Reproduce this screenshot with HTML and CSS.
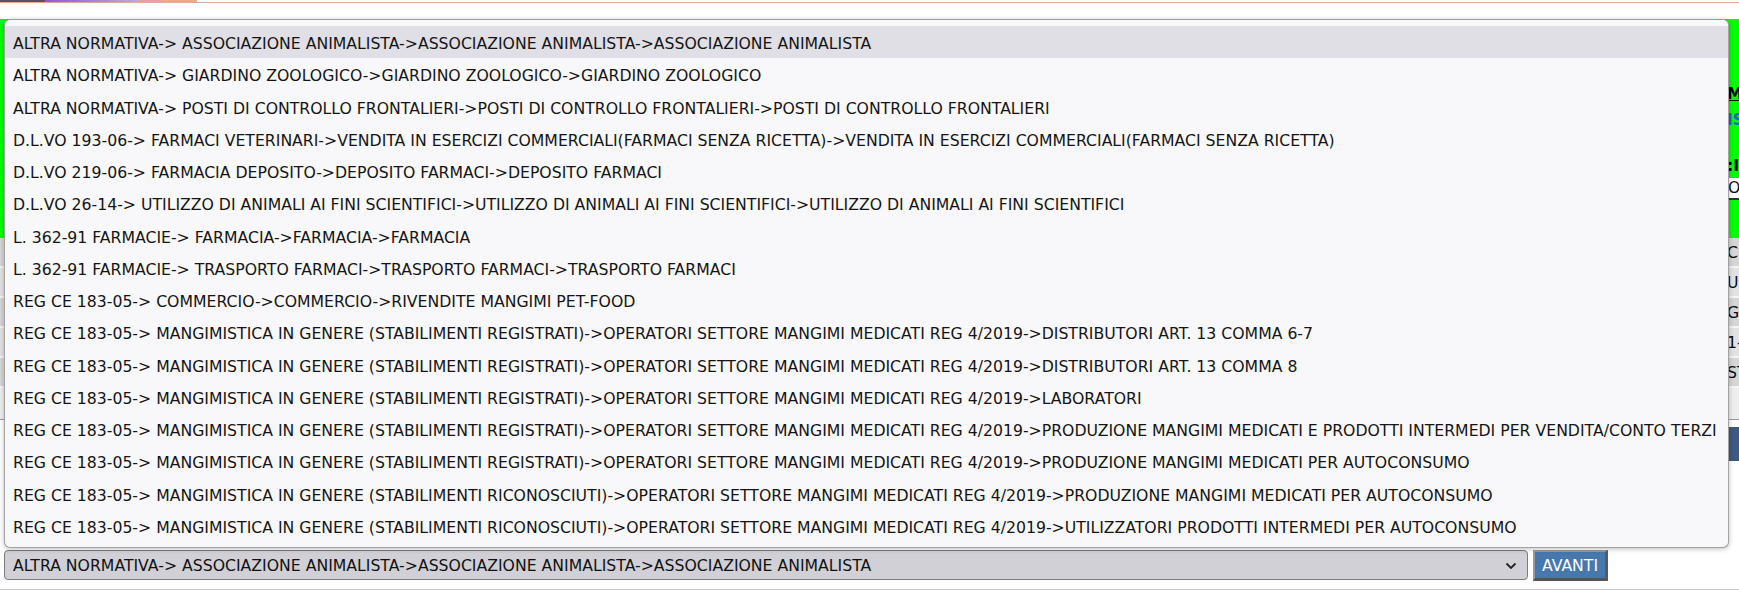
FILE: index.html
```html
<!DOCTYPE html>
<html lang="it">
<head>
<meta charset="utf-8">
<title>Selezione linea</title>
<link rel="stylesheet" href="styles.css">
</head>
<body>
<div class="topbar"></div>
<main class="page">
  <section class="green">
    <div class="side">
      <div class="s-title">MEN</div>
      <div class="s-link">ISC</div>
      <div class="s-label">:IN</div>
      <div class="s-input">ONE</div>
    </div>
  </section>
  <section class="rows">
    <div class="row dark"><span class="cell">CIT</span></div>
    <div class="row light"><span class="cell">UIS</span></div>
    <div class="row dark"><span class="cell">GEN</span></div>
    <div class="row light"><span class="cell">1-2</span></div>
    <div class="row dark"><span class="cell">STA</span></div>
    <div class="row foot"></div>
  </section>
  <div class="barline"><div class="bluebar"></div></div>
  <div class="form">
    <div class="select">
      <span class="sel-text">ALTRA NORMATIVA-&gt; ASSOCIAZIONE ANIMALISTA-&gt;ASSOCIAZIONE ANIMALISTA-&gt;ASSOCIAZIONE ANIMALISTA</span>
      <svg class="chev" width="12" height="8" viewBox="0 0 12 8"><path d="M1.5 1.5 L6 6 L10.5 1.5" fill="none" stroke="#222" stroke-width="1.8"/></svg>
    </div>
    <button class="avanti">AVANTI</button>
  </div>
  <div class="bottomline"></div>
</main>
<ul class="popup">
  <li class="opt sel">ALTRA NORMATIVA-&gt; ASSOCIAZIONE ANIMALISTA-&gt;ASSOCIAZIONE ANIMALISTA-&gt;ASSOCIAZIONE ANIMALISTA</li>
  <li class="opt">ALTRA NORMATIVA-&gt; GIARDINO ZOOLOGICO-&gt;GIARDINO ZOOLOGICO-&gt;GIARDINO ZOOLOGICO</li>
  <li class="opt">ALTRA NORMATIVA-&gt; POSTI DI CONTROLLO FRONTALIERI-&gt;POSTI DI CONTROLLO FRONTALIERI-&gt;POSTI DI CONTROLLO FRONTALIERI</li>
  <li class="opt">D.L.VO 193-06-&gt; FARMACI VETERINARI-&gt;VENDITA IN ESERCIZI COMMERCIALI(FARMACI SENZA RICETTA)-&gt;VENDITA IN ESERCIZI COMMERCIALI(FARMACI SENZA RICETTA)</li>
  <li class="opt">D.L.VO 219-06-&gt; FARMACIA DEPOSITO-&gt;DEPOSITO FARMACI-&gt;DEPOSITO FARMACI</li>
  <li class="opt">D.L.VO 26-14-&gt; UTILIZZO DI ANIMALI AI FINI SCIENTIFICI-&gt;UTILIZZO DI ANIMALI AI FINI SCIENTIFICI-&gt;UTILIZZO DI ANIMALI AI FINI SCIENTIFICI</li>
  <li class="opt">L. 362-91 FARMACIE-&gt; FARMACIA-&gt;FARMACIA-&gt;FARMACIA</li>
  <li class="opt">L. 362-91 FARMACIE-&gt; TRASPORTO FARMACI-&gt;TRASPORTO FARMACI-&gt;TRASPORTO FARMACI</li>
  <li class="opt">REG CE 183-05-&gt; COMMERCIO-&gt;COMMERCIO-&gt;RIVENDITE MANGIMI PET-FOOD</li>
  <li class="opt">REG CE 183-05-&gt; MANGIMISTICA IN GENERE (STABILIMENTI REGISTRATI)-&gt;OPERATORI SETTORE MANGIMI MEDICATI REG 4/2019-&gt;DISTRIBUTORI ART. 13 COMMA 6-7</li>
  <li class="opt">REG CE 183-05-&gt; MANGIMISTICA IN GENERE (STABILIMENTI REGISTRATI)-&gt;OPERATORI SETTORE MANGIMI MEDICATI REG 4/2019-&gt;DISTRIBUTORI ART. 13 COMMA 8</li>
  <li class="opt">REG CE 183-05-&gt; MANGIMISTICA IN GENERE (STABILIMENTI REGISTRATI)-&gt;OPERATORI SETTORE MANGIMI MEDICATI REG 4/2019-&gt;LABORATORI</li>
  <li class="opt">REG CE 183-05-&gt; MANGIMISTICA IN GENERE (STABILIMENTI REGISTRATI)-&gt;OPERATORI SETTORE MANGIMI MEDICATI REG 4/2019-&gt;PRODUZIONE MANGIMI MEDICATI E PRODOTTI INTERMEDI PER VENDITA/CONTO TERZI</li>
  <li class="opt">REG CE 183-05-&gt; MANGIMISTICA IN GENERE (STABILIMENTI REGISTRATI)-&gt;OPERATORI SETTORE MANGIMI MEDICATI REG 4/2019-&gt;PRODUZIONE MANGIMI MEDICATI PER AUTOCONSUMO</li>
  <li class="opt">REG CE 183-05-&gt; MANGIMISTICA IN GENERE (STABILIMENTI RICONOSCIUTI)-&gt;OPERATORI SETTORE MANGIMI MEDICATI REG 4/2019-&gt;PRODUZIONE MANGIMI MEDICATI PER AUTOCONSUMO</li>
  <li class="opt">REG CE 183-05-&gt; MANGIMISTICA IN GENERE (STABILIMENTI RICONOSCIUTI)-&gt;OPERATORI SETTORE MANGIMI MEDICATI REG 4/2019-&gt;UTILIZZATORI PRODOTTI INTERMEDI PER AUTOCONSUMO</li>
</ul>
</body>
</html>
```
FILE: styles.css
```css
html, body {
  margin: 0;
  padding: 0;
  background: #ffffff;
  overflow: hidden;
  width: 1739px;
  height: 591px;
  font-family: "DejaVu Sans", sans-serif;
  font-size: 15.7px;
  color: #111;
  position: relative;
}

.topbar {
  height: 2px;
  border-bottom: 1px solid #dbab94;
  background: linear-gradient(to right,
    #585068 0, #585068 45px,
    #9d50e0 45px, #c9a3e6 140px,
    #f29aa8 140px, #f29aa8 162px,
    #f2a888 162px, #f2a888 197px,
    transparent 197px);
}

.page {
  display: flex;
  flex-direction: column;
}

.green {
  margin-top: 16px;
  height: 219px;
  background: #00ff00;
  display: grid;
  grid-template-columns: 1fr 12px;
}

.side {
  grid-column: 2;
  display: flex;
  flex-direction: column;
  white-space: nowrap;
  font-weight: bold;
}

.s-title {
  margin-top: 66px;
  height: 18px;
  line-height: 18px;
  text-decoration: underline;
  color: #000;
}

.s-link {
  margin-top: 8px;
  line-height: 18px;
  color: #1f62c4;
}

.s-label {
  margin-top: 28px;
  line-height: 18px;
  color: #000;
}

.s-input {
  margin-top: 3px;
  height: 20px;
  line-height: 20px;
  background: #fff;
  border-bottom: 2px solid #333;
  font-weight: normal;
  padding-left: 1px;
}

.rows {
  display: flex;
  flex-direction: column;
}

.row {
  height: 28px;
  border-bottom: 2px solid #f4f4f4;
  display: grid;
  grid-template-columns: 1fr 12px;
  align-items: center;
}

.row.dark { background: #d6d6d6; }
.row.light { background: #e2e2e2; }

.row.foot {
  height: 31px;
  background: #eeeeee;
  border-bottom: 1px solid #9a9a9a;
}

.cell {
  grid-column: 2;
  white-space: nowrap;
  color: #0a0a0a;
}

.barline {
  margin-top: 7px;
  height: 34px;
  display: flex;
  justify-content: flex-end;
}

.bluebar {
  width: 300px;
  background: #3e5a80;
}

.form {
  margin-top: 89px;
  display: flex;
  align-items: flex-start;
  gap: 5px;
  padding-left: 4px;
}

.select {
  box-sizing: border-box;
  width: 1524px;
  height: 30px;
  border: 1px solid #7b7b7b;
  border-radius: 4px;
  background: #d0d0d6;
  display: flex;
  align-items: center;
  justify-content: space-between;
  padding: 1px 10px 0 8px;
}

.sel-text {
  white-space: nowrap;
  color: #111;
}

.chev { display: block; }

.avanti {
  box-sizing: border-box;
  width: 75px;
  height: 31px;
  margin: 0;
  padding: 0;
  background: #4677ad;
  color: #ffffff;
  font-family: "DejaVu Sans", sans-serif;
  font-size: 15.7px;
  border-style: solid;
  border-width: 2px 3px 3px 2px;
  border-color: #9a9a9a #5a5a5a #555 #9a9a9a;
}

.bottomline {
  margin-top: 8px;
  height: 1px;
  background: #c9c9c9;
}

.popup {
  position: absolute;
  left: 4px;
  top: 19px;
  width: 1725px;
  box-sizing: border-box;
  margin: 0;
  padding: 6px 0 5px;
  list-style: none;
  background: #f8f8fa;
  border: 1px solid #a2a2a2;
  border-top-color: #9c9c9c;
  border-radius: 6px;
  box-shadow: 0 1px 5px rgba(0, 0, 0, 0.25);
}

.opt {
  box-sizing: border-box;
  height: 32.25px;
  padding-top: 3px;
  line-height: 29px;
  padding-left: 8px;
  white-space: nowrap;
  color: #141414;
}

.opt.sel {
  background: #dfdfe5;
}
```
